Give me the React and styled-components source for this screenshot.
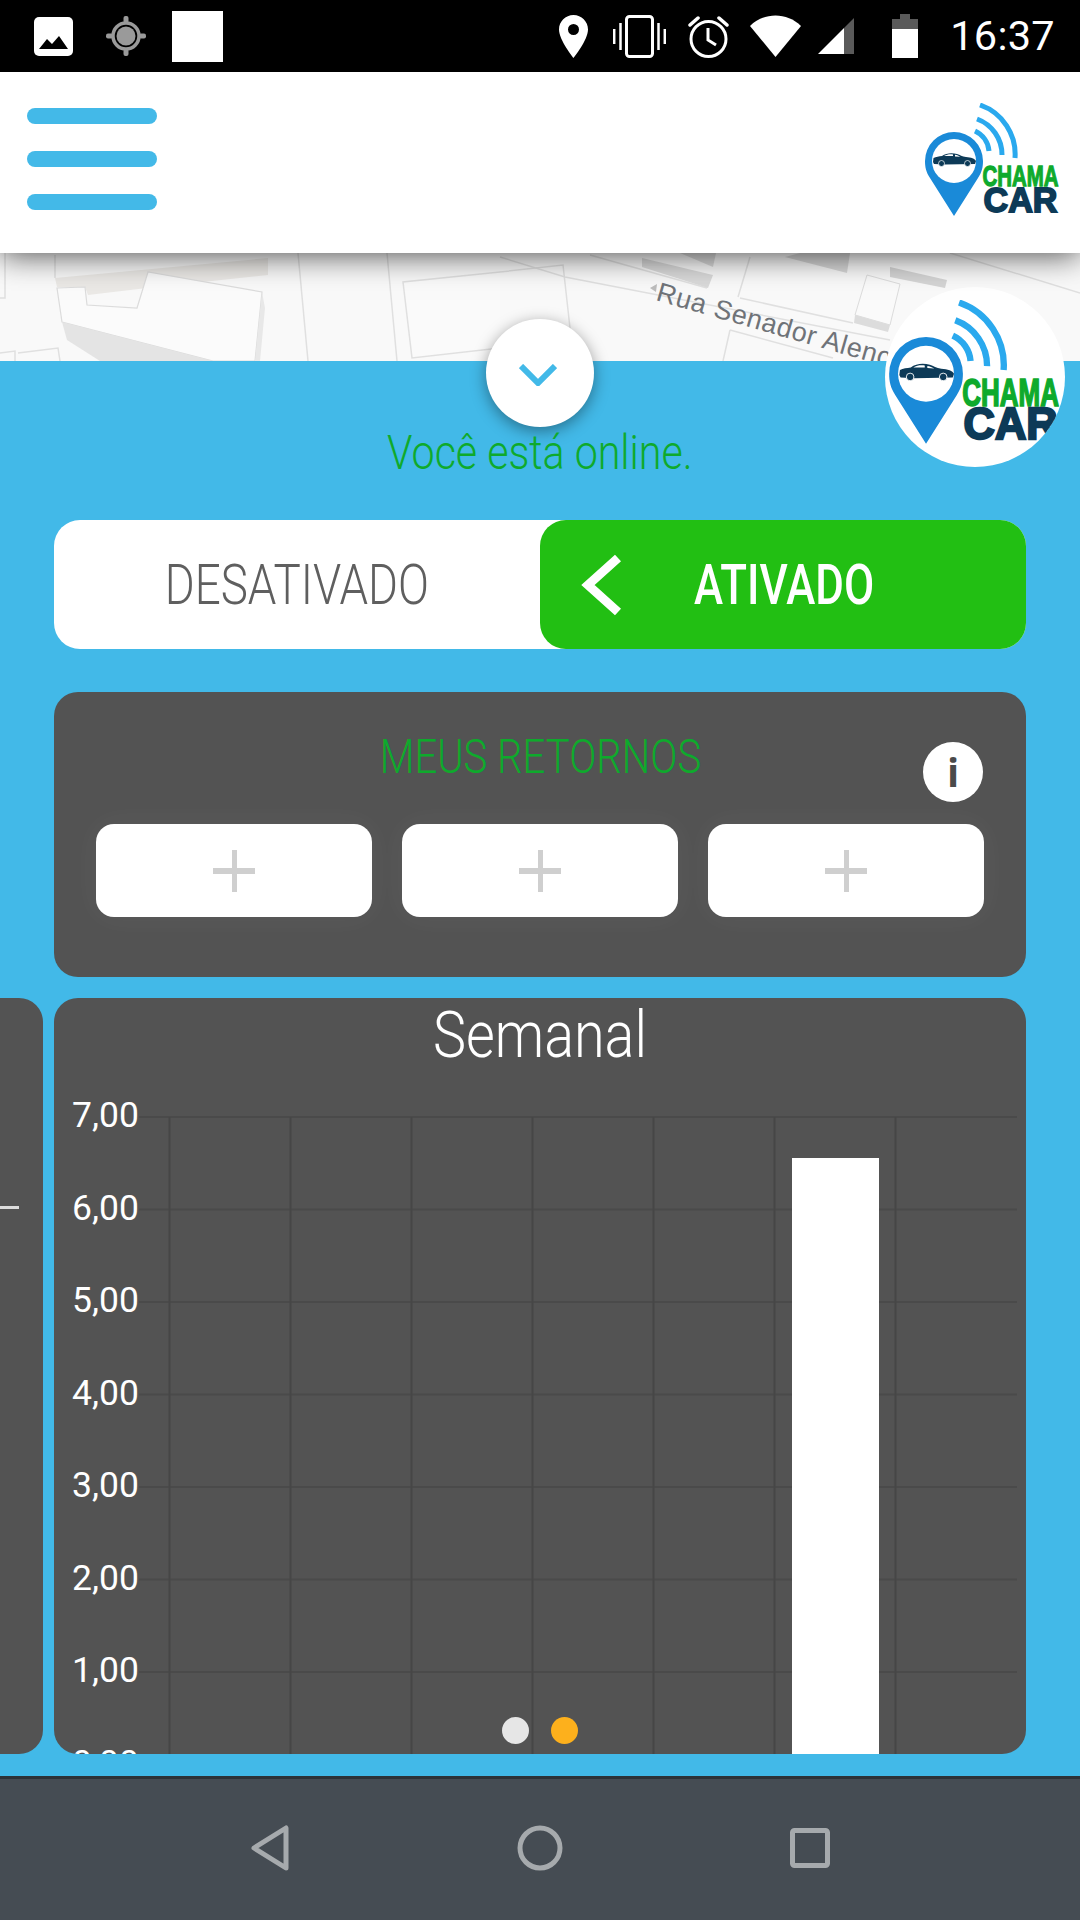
import React from "react";
import styled, { createGlobalStyle } from "styled-components";

const GlobalStyle = createGlobalStyle`
    html, body {
        margin: 0;
        padding: 0;
        background: #42b9e8;
    }
`

const Screen = styled.div`
    width: 1080px;
    height: 1920px;
    display: flex;
    flex-direction: column;
    overflow: hidden;
    font-family: Roboto, "Liberation Sans", sans-serif;
`

// Status bar

const StatusBar = styled.div`
    flex: none;
    position: relative;
    z-index: 4;
    height: 72px;
    display: flex;
    align-items: center;
    background: #000;
    padding: 0 25px 0 34px;
    box-sizing: border-box;
`

const StatusIcon = styled.svg`
    flex: none;
    display: block;
    margin-left: ${props => props.$left || 0}px;
`

const StatusSquare = styled.div`
    flex: none;
    width: 51px;
    height: 51px;
    margin-left: 26px;
    background: #fff;
`

const Clock = styled.span`
    margin-left: auto;
    color: #fff;
    font-size: 41.5px;
    line-height: 72px;
    letter-spacing: 0.3px;
`

const RightIcons = styled.div`
    display: flex;
    align-items: center;
    margin-left: 336px;
`

// Header

const Header = styled.header`
    flex: none;
    position: relative;
    z-index: 3;
    height: 181px;
    display: flex;
    align-items: flex-start;
    justify-content: space-between;
    background: #fff;
    padding: 31px 20px 0 27px;
    box-sizing: border-box;
    box-shadow: 0 2px 30px rgba(0, 0, 0, 0.7);
`

const Burger = styled.div`
    display: flex;
    flex-direction: column;
    gap: 27px;
    padding-top: 5px;
`

const BurgerBar = styled.span`
    display: block;
    width: 130px;
    height: 16px;
    border-radius: 8px;
    background: #43b9e8;
`

// Map

const MapStrip = styled.div`
    flex: none;
    height: 108px;
    overflow: hidden;
    background: #f9f9f9;
`

const MapDrawing = styled.svg`
    display: block;
`

// Painel azul

const Panel = styled.main`
    flex: 1;
    position: relative;
    display: flex;
    flex-direction: column;
    background: #42b9e8;
    padding-top: 62px;
`

const PullButton = styled.button`
    position: absolute;
    left: 486px;
    top: -42px;
    width: 108px;
    height: 108px;
    padding: 4px 5px 0 0;
    border: none;
    border-radius: 50%;
    background: #fff;
    display: flex;
    align-items: center;
    justify-content: center;
    box-shadow: 0 4px 16px rgba(0, 0, 0, 0.4);
`

const LogoBadge = styled.div`
    position: absolute;
    left: 885px;
    top: -74px;
    width: 180px;
    height: 180px;
    border-radius: 50%;
    overflow: hidden;
    background: #fff;
    padding: 13px 0 0 4px;
    box-sizing: border-box;
`

const Squeezed = styled.span`
    display: inline-block;
    white-space: nowrap;
    transform: scaleX(${props => props.$scale});
`

const OnlineText = styled.div`
    height: 60px;
    line-height: 60px;
    margin-bottom: 37px;
    text-align: center;
    font-size: 49px;
    font-weight: 300;
    color: #0eaa2c;
`

const Toggle = styled.div`
    flex: none;
    height: 129px;
    margin: 0 54px 43px;
    display: flex;
    background: #fff;
    border-radius: 26px;
`

const ToggleOff = styled.div`
    flex: 0 0 486px;
    display: flex;
    align-items: center;
    justify-content: center;
    font-size: 56px;
    font-weight: 300;
    color: #5f5f5f;
`

const ToggleOn = styled.div`
    flex: 0 0 486px;
    box-sizing: border-box;
    display: flex;
    align-items: center;
    padding-left: 40px;
    background: #22bf13;
    border-radius: 26px;
    font-size: 56px;
    font-weight: 500;
    color: #fff;
`

const ToggleLabel = styled.div`
    width: 320px;
    margin-left: 2px;
    text-align: center;
`

// Meus retornos

const ReturnsCard = styled.section`
    flex: none;
    position: relative;
    height: 285px;
    margin: 0 54px 21px;
    padding: 0 42px;
    box-sizing: border-box;
    background: #535353;
    border-radius: 24px;
`

const ReturnsTitle = styled.div`
    height: 132px;
    line-height: 130px;
    text-align: center;
    font-size: 49px;
    font-weight: 300;
    color: #0eaa2c;
`

const InfoButton = styled.div`
    position: absolute;
    left: 869px;
    top: 50px;
    width: 60px;
    height: 60px;
    border-radius: 50%;
    background: #fff;
    color: #4a4a4a;
    font-family: "Open Sans", sans-serif;
    font-size: 40px;
    font-weight: 700;
    line-height: 60px;
    text-align: center;
`

const ReturnSlots = styled.div`
    display: grid;
    grid-template-columns: repeat(3, 276px);
    gap: 30px;
`

const ReturnSlot = styled.div`
    position: relative;
    height: 93px;
    background: #fff;
    border-radius: 18px;
    box-shadow: 0 0 30px rgba(255, 255, 255, 0.05);

    &::before, &::after {
        content: "";
        position: absolute;
        background: #cfcfcf;
    }

    &::before {
        left: 117px;
        top: 44px;
        width: 42px;
        height: 6px;
    }

    &::after {
        left: 136px;
        top: 26px;
        width: 5px;
        height: 42px;
    }
`

// Graficos

const ChartRow = styled.div`
    flex: none;
    display: flex;
    gap: 11px;
    height: 756px;
`

const PrevCard = styled.div`
    flex: none;
    width: 43px;
    padding-top: 208px;
    box-sizing: border-box;
    background: #535353;
    border-radius: 0 24px 24px 0;
`

const PrevTick = styled.div`
    width: 19px;
    height: 3px;
    background: #dcdcdc;
`

const ChartCard = styled.section`
    flex: none;
    position: relative;
    width: 972px;
    overflow: hidden;
    background: #535353;
    border-radius: 24px;
`

const ChartTitle = styled.div`
    height: 76px;
    line-height: 76px;
    margin-bottom: 24px;
    text-align: center;
    font-size: 64px;
    font-weight: 300;
    color: #fff;
`

const ChartDrawing = styled.svg`
    display: block;
`

const ChartLabel = styled.text`
    font-family: Roboto, sans-serif;
    font-size: 35.5px;
    fill: #fff;
`

const PageDots = styled.div`
    position: absolute;
    left: 0;
    right: 0;
    bottom: 10px;
    display: flex;
    justify-content: center;
    gap: 22px;
`

const PageDot = styled.span`
    width: 27px;
    height: 27px;
    border-radius: 50%;
    background: ${props => props.$active ? "#fdb01c" : "#e6e6e6"};
`

// Barra de navegacao

const NavBar = styled.nav`
    flex: none;
    height: 144px;
    display: grid;
    grid-template-columns: repeat(3, 270px);
    justify-content: center;
    align-items: center;
    background: #454c53;
    border-top: 3px solid #2c3338;
    box-sizing: border-box;
    padding-bottom: 3px;
`

const NavItem = styled.div`
    display: flex;
    justify-content: center;
`

function Logo({ width, height }) {
    return (
        <svg width={width} height={height} viewBox="0 0 135 114" style={{ display: "block", flex: "none" }}>
            <path d="M29 113 L5 75 C1 69 0 64 0 58 A29 29 0 0 1 58 58 C58 64 57 69 53 75 Z" fill="#1a8ad8" />
            <circle cx="29" cy="58" r="22" fill="#fff" />
            <path d="M8 59 L8.5 55 C11 53.5 14 53.5 17 53 C21 50 27 49.5 32 51 C35 52 37 53.5 41 54 C46 54.5 50 55.5 51 58 L50 61 L20 61.5 L9 61 Z" fill="#0d3a57" />
            <path d="M19 53 C22 51 26 51 28 51.5 L28 53 Z M30 51.8 C32 52 34 53 35.5 53.8 L30 53.5 Z" fill="#fff" />
            <circle cx="16.5" cy="60.5" r="3" fill="#0d3a57" stroke="#fff" strokeWidth="0.7" />
            <circle cx="42.5" cy="60.5" r="3" fill="#0d3a57" stroke="#fff" strokeWidth="0.7" />
            <g fill="none" stroke="#2aa9ee" strokeWidth="5">
                <path d="M55 2 A52 52 0 0 1 90 55" />
                <path d="M52 16 A38 38 0 0 1 77 52" />
                <path d="M50 28 A24 24 0 0 1 64 48" />
            </g>
            <text x="57.5" y="83" fontFamily="Liberation Sans" fontWeight="700" fontSize="30" fill="#0eaa2c" stroke="#0eaa2c" strokeWidth="1.3" textLength="76" lengthAdjust="spacingAndGlyphs">CHAMA</text>
            <text x="58.5" y="109" fontFamily="Liberation Sans" fontWeight="700" fontSize="35" fill="#0d3a57" stroke="#0d3a57" strokeWidth="1.8" textLength="74" lengthAdjust="spacingAndGlyphs">CAR</text>
        </svg>
    )
}

function MapBackground() {
    return (
        <MapDrawing width="1080" height="108" viewBox="0 0 1080 108">
            <g stroke="#e0e0e0" strokeWidth="1.5" fill="none">
                <path d="M5 0 L5 45 L0 45" />
                <path d="M0 100 L15 98 L15 108 M18 100 L58 95 L60 108" />
                <path d="M55 2 L55 25" />
                <path d="M298 0 L308 108 M387 0 L397 108" />
                <path d="M500 19 L403 29 L412 105 L500 95" fill="#fafafa" />
                <path d="M500 19 L563 12 L573 102" />
                <path d="M500 4 L565 24 L890 87" />
                <path d="M590 2 L707 35 M740 45 L853 70" />
                <path d="M750 4 L738 44" />
                <path d="M730 77 L723 108 M730 77 L833 105" />
                <path d="M950 0 L1080 40" />
            </g>
            <polygon points="55,25 268,5 268,22 147,35 88,42 85,34 57,34" fill="#ebe9e6" />
            <polygon points="57,35 85,34 87,52 137,55 148,19 262,39 255,108 213,108 62,69" fill="#fbfbfb" stroke="#dcdcdc" strokeWidth="1.2" />
            <polygon points="62,69 213,108 100,108 67,87" fill="#e4e4e4" />
            <polygon points="262,39 265,55 260,108 255,108" fill="#e8e8e8" />
            <polygon points="642,5 713,22 708,35 642,14" fill="#dadada" />
            <polygon points="680,0 716,0 713,14" fill="#dadada" />
            <polygon points="785,4 847,20 850,0 800,0" fill="#d8d8d8" />
            <polygon points="867,22 900,31 890,72 855,62" fill="#fafafa" stroke="#dcdcdc" />
            <polygon points="855,62 890,72 888,79 854,70" fill="#dcdcdc" />
            <polygon points="890,14 947,27 945,35 890,24" fill="#d5d5d5" />
            <polygon points="650,35 657,31 656,39" fill="#bdbdbd" />
            <text x="655" y="47" transform="rotate(16 655 47)" fontFamily="Liberation Sans" fontSize="27" letterSpacing="0.6" fill="#6f7378">Rua Senador Alenc</text>
        </MapDrawing>
    )
}

const lines = [7, 6, 5, 4, 3, 2, 1, 0]
const columns = [115, 236, 357, 478, 599, 720, 841]

function WeekChart() {
    return (
        <ChartDrawing width="972" height="656" viewBox="0 0 972 656">
            <g stroke="#4a4a4a" strokeWidth="2">
                {lines.map((value, i) => (
                    <line key={value} x1="85" x2="963" y1={19 + i * 92.5} y2={19 + i * 92.5} />
                ))}
            </g>
            <g stroke="#464646" strokeWidth="2">
                {columns.map(x => (
                    <line key={x} x1={x + 0.5} x2={x + 0.5} y1="19" y2="656" />
                ))}
            </g>
            <rect x="738" y="60" width="87" height="596" fill="#fff" />
            {lines.map((value, i) => (
                <ChartLabel key={value} x="18" y={29 + i * 92.5}>{value},00</ChartLabel>
            ))}
        </ChartDrawing>
    )
}

export default function App() {
    return (
        <Screen>
            <GlobalStyle />

            <StatusBar>
                <StatusIcon width="39" height="39" viewBox="0 0 39 39">
                    <rect width="39" height="39" rx="5" fill="#fff" />
                    <path d="M5 32 L13 22 L18 27 L25 19 L34 32 Z" fill="#000" />
                </StatusIcon>
                <StatusIcon $left={33} width="40" height="40" viewBox="0 0 40 40">
                    <g fill="#9a9a9a">
                        <rect x="17.5" y="0" width="5" height="7" rx="2" />
                        <rect x="17.5" y="33" width="5" height="7" rx="2" />
                        <rect x="0" y="17.5" width="7" height="5" rx="2" />
                        <rect x="33" y="17.5" width="7" height="5" rx="2" />
                        <circle cx="20" cy="20" r="9.5" />
                    </g>
                    <circle cx="20" cy="20" r="13" fill="none" stroke="#9a9a9a" strokeWidth="3.5" />
                </StatusIcon>
                <StatusSquare />
                <RightIcons>
                    <StatusIcon width="29" height="43" viewBox="0 0 29 43">
                        <path d="M14.5 0 C6.5 0 0 6.5 0 14.5 C0 25 14.5 43 14.5 43 C14.5 43 29 25 29 14.5 C29 6.5 22.5 0 14.5 0 Z M14.5 20 A5.5 5.5 0 1 1 14.5 9 A5.5 5.5 0 0 1 14.5 20 Z" fill="#fff" />
                    </StatusIcon>
                    <StatusIcon $left={25} width="53" height="43" viewBox="0 0 53 43">
                        <rect x="13.5" y="1.5" width="26" height="40" rx="3" fill="none" stroke="#fff" strokeWidth="3" />
                        <g stroke="#fff" strokeWidth="2.5">
                            <line x1="1.2" y1="14" x2="1.2" y2="29" />
                            <line x1="7.5" y1="8" x2="7.5" y2="35" />
                            <line x1="45.5" y1="8" x2="45.5" y2="35" />
                            <line x1="51.8" y1="14" x2="51.8" y2="29" />
                        </g>
                    </StatusIcon>
                    <StatusIcon $left={22} width="41" height="43" viewBox="0 0 41 43">
                        <circle cx="20.5" cy="24" r="17.5" fill="none" stroke="#fff" strokeWidth="3" />
                        <path d="M20 13 L20 25 L28 30" fill="none" stroke="#fff" strokeWidth="3" />
                        <path d="M2 10 L10 3 M39 10 L31 3" stroke="#fff" strokeWidth="3.5" strokeLinecap="round" />
                    </StatusIcon>
                    <StatusIcon $left={21} width="51" height="42" viewBox="0 0 51 42">
                        <path d="M0 11 C14 -3 37 -3 51 11 L25.5 42 Z" fill="#fff" />
                    </StatusIcon>
                    <StatusIcon $left={17} width="36" height="36" viewBox="0 0 36 36">
                        <path d="M0 36 L26 10 L26 36 Z" fill="#fff" />
                        <path d="M26 10 L36 0 L36 36 L26 36 Z" fill="#5a5a5a" />
                    </StatusIcon>
                    <StatusIcon $left={38} width="26" height="44" viewBox="0 0 26 44">
                        <rect x="8" y="0" width="10" height="5" fill="#5a5a5a" />
                        <rect x="0" y="5" width="26" height="10" fill="#5a5a5a" />
                        <rect x="0" y="15" width="26" height="29" fill="#fff" />
                    </StatusIcon>
                </RightIcons>
                <Clock>16:37</Clock>
            </StatusBar>

            <Header>
                <Burger>
                    <BurgerBar />
                    <BurgerBar />
                    <BurgerBar />
                </Burger>
                <Logo width={135} height={114} />
            </Header>

            <MapStrip>
                <MapBackground />
            </MapStrip>

            <Panel>
                <PullButton>
                    <svg width="38" height="22" viewBox="0 0 38 22">
                        <path d="M2 2 L19 19 L36 2" fill="none" stroke="#42b9e8" strokeWidth="6" />
                    </svg>
                </PullButton>
                <LogoBadge>
                    <Logo width={172} height={145} />
                </LogoBadge>

                <OnlineText><Squeezed $scale={0.84}>Você está online.</Squeezed></OnlineText>

                <Toggle>
                    <ToggleOff><Squeezed $scale={0.816}>DESATIVADO</Squeezed></ToggleOff>
                    <ToggleOn>
                        <svg width="42" height="62" viewBox="0 0 42 62">
                            <path d="M38 4 L8 31 L38 58" fill="none" stroke="#fff" strokeWidth="9" />
                        </svg>
                        <ToggleLabel><Squeezed $scale={0.783}>ATIVADO</Squeezed></ToggleLabel>
                    </ToggleOn>
                </Toggle>

                <ReturnsCard>
                    <ReturnsTitle><Squeezed $scale={0.818}>MEUS RETORNOS</Squeezed></ReturnsTitle>
                    <InfoButton>i</InfoButton>
                    <ReturnSlots>
                        <ReturnSlot />
                        <ReturnSlot />
                        <ReturnSlot />
                    </ReturnSlots>
                </ReturnsCard>

                <ChartRow>
                    <PrevCard><PrevTick /></PrevCard>
                    <ChartCard>
                        <ChartTitle><Squeezed $scale={0.87}>Semanal</Squeezed></ChartTitle>
                        <WeekChart />
                        <PageDots>
                            <PageDot />
                            <PageDot $active />
                        </PageDots>
                    </ChartCard>
                </ChartRow>
            </Panel>

            <NavBar>
                <NavItem>
                    <svg width="40" height="46" viewBox="0 0 40 46">
                        <path d="M36 3 L36 43 L4 23 Z" fill="none" stroke="#a6aaad" strokeWidth="5" strokeLinejoin="round" />
                    </svg>
                </NavItem>
                <NavItem>
                    <svg width="46" height="46" viewBox="0 0 46 46">
                        <circle cx="23" cy="23" r="20" fill="none" stroke="#a6aaad" strokeWidth="5" />
                    </svg>
                </NavItem>
                <NavItem>
                    <svg width="40" height="40" viewBox="0 0 40 40">
                        <rect x="2.5" y="2.5" width="35" height="35" rx="2" fill="none" stroke="#a6aaad" strokeWidth="5" />
                    </svg>
                </NavItem>
            </NavBar>
        </Screen>
    )
}
